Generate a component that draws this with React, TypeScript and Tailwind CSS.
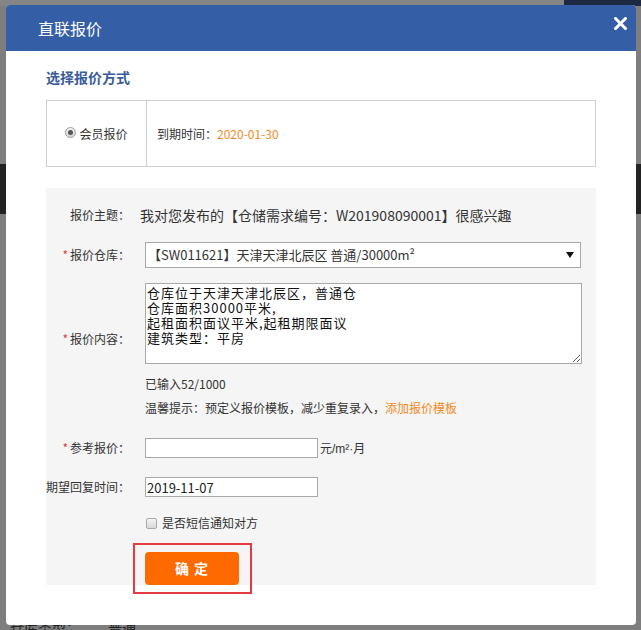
import React from "react"

function Label({ text, required, className = "" }: { text: string; required?: boolean; className?: string }) {
    return (
        <div className={`w-[84px] shrink-0 text-right text-[12px] leading-[14px] text-[#333] whitespace-nowrap ${className}`}>
            {required && <span className="text-[#e4393c] mr-[2px]">*</span>}
            {text}
        </div>
    )
}

export default function App() {
    return (
        <div className="relative w-[641px] h-[630px] overflow-hidden bg-[#7e7e7e] font-['Noto_Sans_CJK_SC',sans-serif]">

            {/* Page behind the overlay */}
            <div className="flex flex-col h-full">
                <div className="h-[6px] flex">
                    <div className="w-[564px] bg-[#858585]" />
                    <div className="flex-1 bg-[#1d2940]" />
                </div>
                <div className="h-[158px] bg-[#7e7e7e]" />
                <div className="h-[50px] bg-[#222]" />
                <div className="flex-1 bg-[#7e7e7e]" />
                <div className="h-[12px] flex items-start gap-[28px] pl-[10px] text-[14px] leading-[18px] text-[#222]">
                    <span>仓库类型：</span>
                    <span>普通</span>
                </div>
            </div>

            {/* Dialog */}
            <div className="absolute left-[6px] top-[5px] w-[630px] h-[620px] bg-white rounded-[4px] flex flex-col">
                <div className="relative h-[46px] bg-[#345ea6] rounded-t-[4px] flex items-center pl-[32px]">
                    <h1 className="text-[16px] text-white">直联报价</h1>
                    <button className="absolute right-[9px] top-[12px] w-[13px] h-[13px]">
                        <svg viewBox="0 0 13 13" className="w-[13px] h-[13px]">
                            <path d="M1.5 1.5 L11.5 11.5 M11.5 1.5 L1.5 11.5" stroke="white" strokeWidth="3" strokeLinecap="square" />
                        </svg>
                    </button>
                </div>

                <div className="px-[40px] flex flex-col">
                    <h2 className="mt-[18px] text-[14px] leading-[16px] font-bold text-[#3a5c9c]">选择报价方式</h2>

                    {/* Quote type */}
                    <div className="mt-[15px] h-[67px] border border-[#cfcfcf] flex">
                        <div className="w-[100px] border-r border-[#cfcfcf] flex items-center justify-center gap-[3px] text-[12px] text-[#333]">
                            <span className="w-[11px] h-[11px] rounded-full border border-[#9d9d9d] bg-gradient-to-b from-[#f2f2f2] to-[#d6d6d6] flex items-center justify-center -mt-[3px]">
                                <span className="w-[5px] h-[5px] rounded-full bg-[#555]" />
                            </span>
                            <span>会员报价</span>
                        </div>
                        <div className="flex items-center pl-[10px] text-[12px] text-[#333]">
                            到期时间：<span className="text-[#f28a1e]">2020-01-30</span>
                        </div>
                    </div>

                    {/* Form */}
                    <div className="mt-[21px] h-[397px] bg-[#f5f5f5] flex flex-col">
                        <div className="mt-[14px] h-[26px] flex items-center">
                            <Label text="报价主题：" />
                            <div className="ml-[10px] text-[14px] text-[#333] whitespace-nowrap">
                                我对您发布的【仓储需求编号：W201908090001】很感兴趣
                            </div>
                        </div>

                        <div className="mt-[14px] h-[26px] flex items-center">
                            <Label text="报价仓库：" required />
                            <div className="ml-[15px] w-[436px] h-[26px] border border-[#a9a9a9] bg-white flex items-center justify-between pl-[2px] pr-[6px] text-[13px] font-normal text-[#333] whitespace-nowrap">
                                <span>【SW011621】天津天津北辰区 普通/30000m²</span>
                                <svg viewBox="0 0 8 8" className="w-[8px] h-[8px]">
                                    <path d="M0 1 L8 1 L4 7 Z" fill="#111" />
                                </svg>
                            </div>
                        </div>

                        <div className="mt-[15px] flex items-start">
                            <Label text="报价内容：" required className="mt-[49px]" />
                            <textarea
                                readOnly
                                className="ml-[15px] w-[437px] h-[81px] border border-[#a9a9a9] bg-white pl-[1px] pt-[1px] text-[13px] leading-[15px] tracking-[1px] text-[#111] outline-none"
                                defaultValue={"仓库位于天津天津北辰区，普通仓\n仓库面积30000平米,\n起租面积面议平米,起租期限面议\n建筑类型：平房"}
                            />
                        </div>

                        <div className="mt-[12px] ml-[99px] text-[12px] leading-[16px] text-[#333]">已输入52/1000</div>
                        <div className="mt-[8px] ml-[99px] text-[12px] leading-[16px] text-[#333]">
                            温馨提示：预定义报价模板，减少重复录入，<span className="text-[#f28a1e]">添加报价模板</span>
                        </div>

                        <div className="mt-[22px] h-[20px] flex items-center">
                            <Label text="参考报价：" required />
                            <input className="ml-[15px] w-[173px] h-[20px] border border-[#a9a9a9] bg-white outline-none" />
                            <span className="ml-[2px] text-[12px] text-[#333]">
                                元<span className="font-['Liberation_Sans',sans-serif]">/m²·</span>月
                            </span>
                        </div>

                        <div className="mt-[19px] h-[20px] flex items-center">
                            <Label text="期望回复时间：" />
                            <input
                                readOnly
                                defaultValue="2019-11-07"
                                className="ml-[15px] w-[173px] h-[20px] border border-[#a9a9a9] bg-white pl-[1px] text-[13px] text-[#222] outline-none"
                            />
                        </div>

                        <div className="mt-[18px] h-[16px] flex items-center ml-[100px] gap-[5px]">
                            <span className="w-[11px] h-[11px] rounded-[2px] border border-[#a9a9a9] bg-gradient-to-b from-[#f4f4f4] to-[#d9d9d9]" />
                            <span className="text-[12px] text-[#333]">是否短信通知对方</span>
                        </div>

                        <div className="mt-[21px] ml-[99px] relative w-[94px]">
                            <button className="w-[94px] h-[33px] rounded-[4px] bg-[#ff6a00] text-white text-[14px] font-bold tracking-[1px]">
                                确 定
                            </button>
                            <div className="absolute -left-[12px] -top-[9px] w-[119px] h-[51px] border-2 border-[#e53a3f] pointer-events-none" />
                        </div>
                    </div>
                </div>
            </div>
        </div>
    )
}
